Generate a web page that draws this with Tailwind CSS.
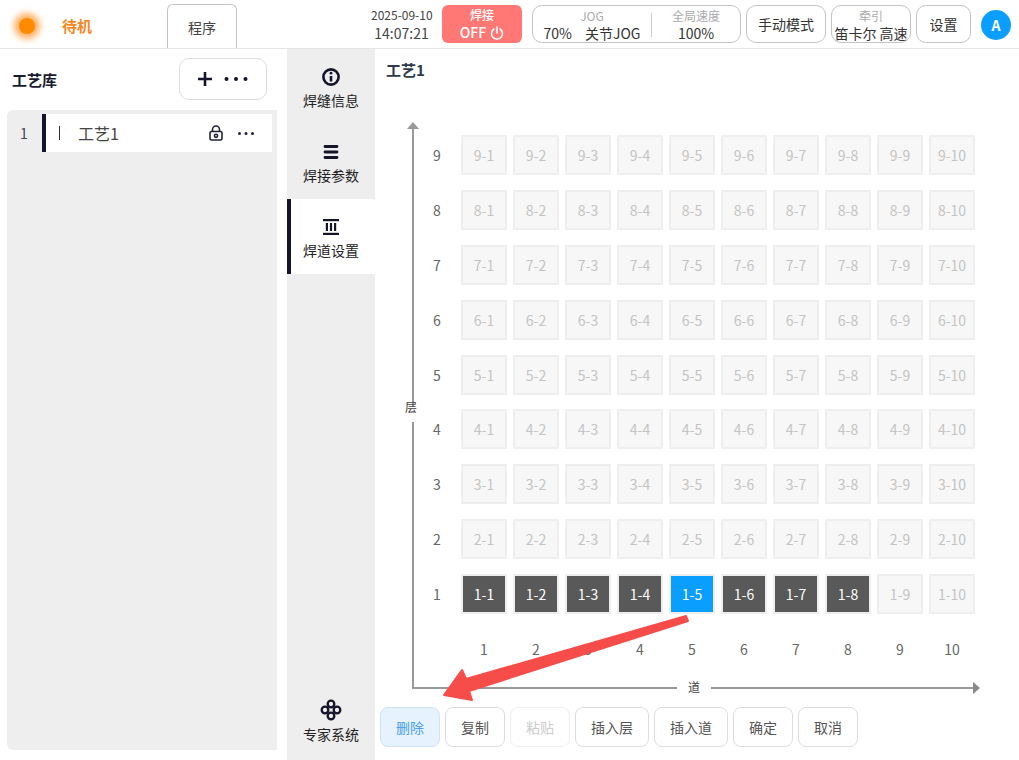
<!DOCTYPE html>
<html lang="zh">
<head>
  <meta charset="UTF-8" />
  <title>工艺库</title>
  <script src="https://cdn.jsdelivr.net/npm/@tailwindcss/browser@4"></script>
</head>
<body class="w-[1019px] h-[760px] overflow-hidden bg-white text-[#333] text-sm font-['Noto_Sans_CJK_SC','Noto_Sans',sans-serif]">

  <!-- Top bar -->
  <header class="h-[49px] border-b border-[#e5e5e5] flex items-start relative">
    <div class="w-4 h-4 mt-[18px] ml-[19px] rounded-full bg-[#ff8a00] shadow-[0_0_6px_5px_#ffb266]"></div>
    <div class="ml-[27px] mt-4 w-[105px] text-[15px] leading-5 font-bold text-[#f5891f]">待机</div>
    <div class="w-[70px] h-[44px] mt-1 border border-b-0 border-[#c4c4c4] rounded-t-md flex items-center justify-center text-[#444]">程序</div>
    <div class="ml-[134px] w-[61px] mt-[6px] text-center text-[#444]">
      <div class="text-xs leading-[18px] whitespace-nowrap">2025-09-10</div>
      <div class="leading-[18px] whitespace-nowrap">14:07:21</div>
    </div>
    <div class="ml-[10px] mt-[5px] w-[80px] h-[38px] rounded-md bg-[#ff7875] text-white text-center font-medium">
      <div class="text-xs leading-[18px] mt-px">焊接</div>
      <div class="flex items-center justify-center gap-1 leading-[17px]">OFF
        <svg class="w-[14px] h-[14px]" viewBox="0 0 14 14" fill="none" stroke="white" stroke-width="1.5" stroke-linecap="round"><path d="M7 1v6"/><path d="M4 3a5.5 5.5 0 1 0 6 0"/></svg>
      </div>
    </div>
    <div class="ml-[10px] mt-[5px] w-[209px] h-[38px] rounded-[10px] border border-[#c4c4c4] flex text-center relative">
      <div class="w-[118px]">
        <div class="text-xs leading-[18px] text-[#aaa] mt-px">JOG</div>
        <div class="flex justify-center gap-[13px] leading-[17px] whitespace-nowrap"><span>70%</span><span>关节JOG</span></div>
      </div>
      <div class="w-px h-[24px] mt-[7px] bg-[#ccc]"></div>
      <div class="flex-1">
        <div class="text-xs leading-[18px] text-[#aaa] mt-px">全局速度</div>
        <div class="leading-[17px]">100%</div>
      </div>
    </div>
    <div class="ml-[5px] mt-[5px] w-[80px] h-[38px] rounded-[10px] border border-[#c4c4c4] flex items-center justify-center">手动模式</div>
    <div class="ml-[5px] mt-[5px] w-[80px] h-[38px] rounded-[10px] border border-[#c4c4c4] text-center overflow-hidden">
      <div class="text-xs leading-[18px] text-[#aaa] mt-px">牵引</div>
      <div class="leading-[17px] whitespace-nowrap">笛卡尔 高速</div>
    </div>
    <div class="ml-[5px] mt-[5px] w-[55px] h-[38px] rounded-[10px] border border-[#c4c4c4] flex items-center justify-center">设置</div>
    <div class="ml-[10px] mt-[10px] w-[30px] h-[30px] rounded-full bg-[#0a9eff] text-white font-bold flex items-center justify-center">A</div>
  </header>

  <div class="flex h-[711px]">
    <!-- Process library -->
    <aside class="w-[287px] shrink-0">
      <div class="h-[61px] flex items-start">
        <div class="ml-3 mt-[21px] w-[167px] text-[15px] leading-5 font-bold text-[#1a1a2e]">工艺库</div>
        <div class="mt-[9px] w-[88px] h-[42px] border border-[#ddd] rounded-[10px] flex items-center">
          <svg class="ml-[17px] w-4 h-4" viewBox="0 0 16 16" fill="none" stroke="#14142b" stroke-width="2.6"><path d="M8 1v14M1 8h14"/></svg>
          <svg class="ml-[11px] w-6 h-1" viewBox="0 0 24 4" fill="#14142b"><circle cx="2.5" cy="2" r="2"/><circle cx="12" cy="2" r="2"/><circle cx="21.5" cy="2" r="2"/></svg>
        </div>
      </div>
      <div class="ml-[7px] w-[270px] h-[640px] bg-[#eee] rounded-l-md pt-1">
        <div class="flex items-center h-[38px] w-[265px]">
          <div class="w-[35px] text-center text-[#445] pr-[1px]">1</div>
          <div class="flex-1 h-full bg-white border-l-4 border-[#14142b] flex items-center">
            <div class="ml-[13px] w-px h-[14px] bg-[#333]"></div>
            <div class="ml-[18px] w-[131px] text-base text-[#444]">工艺1</div>
            <svg class="w-[14px] h-4" viewBox="0 0 14 16" fill="none" stroke="#22223a" stroke-width="1.6"><path d="M3.5 7V4.5a3.5 3.5 0 0 1 7 0V7"/><rect x="1" y="6.5" width="12" height="8.5" rx="1.5"/><circle cx="7" cy="10.8" r="1.6"/></svg>
            <svg class="ml-[15px] w-4 h-[3px]" viewBox="0 0 16 3" fill="#22223a"><circle cx="1.5" cy="1.5" r="1.5"/><circle cx="8" cy="1.5" r="1.5"/><circle cx="14.5" cy="1.5" r="1.5"/></svg>
          </div>
        </div>
      </div>
    </aside>

    <!-- Section tabs -->
    <nav class="w-[88px] shrink-0 bg-[#eee] flex flex-col text-[#222] leading-5">
      <div class="h-[75px] flex flex-col items-center pt-[18px] gap-[3px]">
        <svg class="w-5 h-5" viewBox="0 0 20 20" fill="none" stroke="#14142b"><circle cx="10" cy="10" r="7.6" stroke-width="2.6"/><path d="M10 9v5.5" stroke-width="2.6"/><circle cx="10" cy="6.2" r="1.4" fill="#14142b" stroke="none"/></svg>
        <span>焊缝信息</span>
      </div>
      <div class="h-[75px] flex flex-col items-center pt-[18px] gap-[3px]">
        <svg class="w-5 h-5" viewBox="0 0 20 20" fill="none" stroke="#14142b" stroke-width="2.8" stroke-linecap="round"><path d="M4 4.5h12M4 10h12M4 15.500h12"/></svg>
        <span>焊接参数</span>
      </div>
      <div class="h-[75px] flex flex-col items-center pt-[18px] gap-[3px] bg-white border-l-4 border-[#14142b] pr-1">
        <svg class="w-5 h-5" viewBox="0 0 20 20" fill="#14142b"><rect x="2" y="2" width="16" height="2.2"/><rect x="2" y="15.800" width="16" height="2.200"/><rect x="4.800" y="6" width="2.200" height="8"/><rect x="8.900" y="6" width="2.200" height="8"/><rect x="13" y="6" width="2.200" height="8"/></svg>
        <span>焊道设置</span>
      </div>
      <div class="mt-auto h-[61px] flex flex-col items-center gap-[3px]">
        <svg class="w-[22px] h-[22px]" viewBox="0 0 22 22" fill="none" stroke="#14142b" stroke-width="2.300"><circle cx="11" cy="5" r="3.300"/><circle cx="11" cy="17" r="3.300"/><circle cx="5" cy="11" r="3.300"/><circle cx="17" cy="11" r="3.300"/></svg>
        <span>专家系统</span>
      </div>
    </nav>

    <!-- Bead grid -->
    <main class="relative flex-1 flex flex-col">
      <div class="ml-[11px] mt-[11px] text-[15px] leading-5 font-bold text-[#2f3a4a]">工艺1</div>
      <div id="beadGrid" class="ml-[44px] mt-[55px] grid grid-cols-[36px_repeat(10,46px)] grid-rows-[repeat(10,40px)] gap-x-[6px] gap-y-[14.875px] items-center justify-items-center"></div>

      <!-- Axes -->
      <div class="absolute left-[37px] top-[76px] w-[2px] h-[282px] bg-[#999]"></div>
      <div class="absolute left-[37px] top-[373px] w-[2px] h-[267px] bg-[#999]"></div>
      <div class="absolute left-[32px] top-[73px] w-0 h-0 border-x-[6px] border-x-transparent border-b-[7px] border-b-[#999]"></div>
      <div class="absolute left-[30px] top-[349px] text-xs leading-[18px] text-[#444]">层</div>
      <div class="absolute left-[37px] top-[638px] w-[265px] h-[2px] bg-[#999]"></div>
      <div class="absolute left-[336px] top-[638px] w-[263px] h-[2px] bg-[#999]"></div>
      <div class="absolute left-[598px] top-[633px] w-0 h-0 border-y-[6px] border-y-transparent border-l-[7px] border-l-[#888]"></div>
      <div class="absolute left-[313px] top-[629px] text-xs leading-[18px] text-[#444]">道</div>

      <!-- Actions -->
      <div class="ml-[5px] mt-[38px] flex gap-[5px] text-[#555]">
        <button class="w-[60px] h-[40px] rounded-lg border border-[#cfe3f7] bg-[#e6f2fd] text-[#4a9ff0]">删除</button>
        <button class="w-[60px] h-[40px] rounded-lg border border-[#ddd]">复制</button>
        <button class="w-[60px] h-[40px] rounded-lg border border-[#eee] text-[#ccc]">粘贴</button>
        <button class="w-[74px] h-[40px] rounded-lg border border-[#ddd]">插入层</button>
        <button class="w-[74px] h-[40px] rounded-lg border border-[#ddd]">插入道</button>
        <button class="w-[60px] h-[40px] rounded-lg border border-[#ddd]">确定</button>
        <button class="w-[60px] h-[40px] rounded-lg border border-[#ddd]">取消</button>
      </div>

      <!-- Annotation arrow -->
      <svg class="absolute left-0 top-0 w-[644px] h-[711px] pointer-events-none" viewBox="0 0 644 711" fill="#f64d4a" stroke="#f64d4a" stroke-width="2" stroke-linejoin="round">
        <path d="M311 567L313 572L94 642L97 651L69 646L87 621L91 630Z"/>
      </svg>
    </main>
  </div>

  <script>
    // rows 9..1, bottom row has the beads that are set
    const grid = document.getElementById('beadGrid');
    const LABEL = 'text-[#666]';
    const EMPTY = 'w-[46px] h-[40px] flex items-center justify-center border-2 border-[#eee] bg-[#f7f7f7] text-[#c4c4c4]';
    const FILLED = 'w-[46px] h-[40px] flex items-center justify-center border-2 border-[#eee] bg-[#595959] text-white';
    const ACTIVE = 'w-[46px] h-[40px] flex items-center justify-center border-2 border-[#eee] bg-[#0a9eff] text-white';

    function add(text, cls) {
      const el = document.createElement('div');
      el.className = cls;
      el.textContent = text;
      grid.appendChild(el);
    }

    for (let r = 9; r >= 1; r--) {
      add(r, LABEL);
      for (let c = 1; c <= 10; c++) {
        let cls = EMPTY;
        if (r === 1 && c <= 8) cls = c === 5 ? ACTIVE : FILLED;
        add(r + '-' + c, cls);
      }
    }
    add('', LABEL);
    for (let c = 1; c <= 10; c++) add(c, LABEL);
  </script>
</body>
</html>
